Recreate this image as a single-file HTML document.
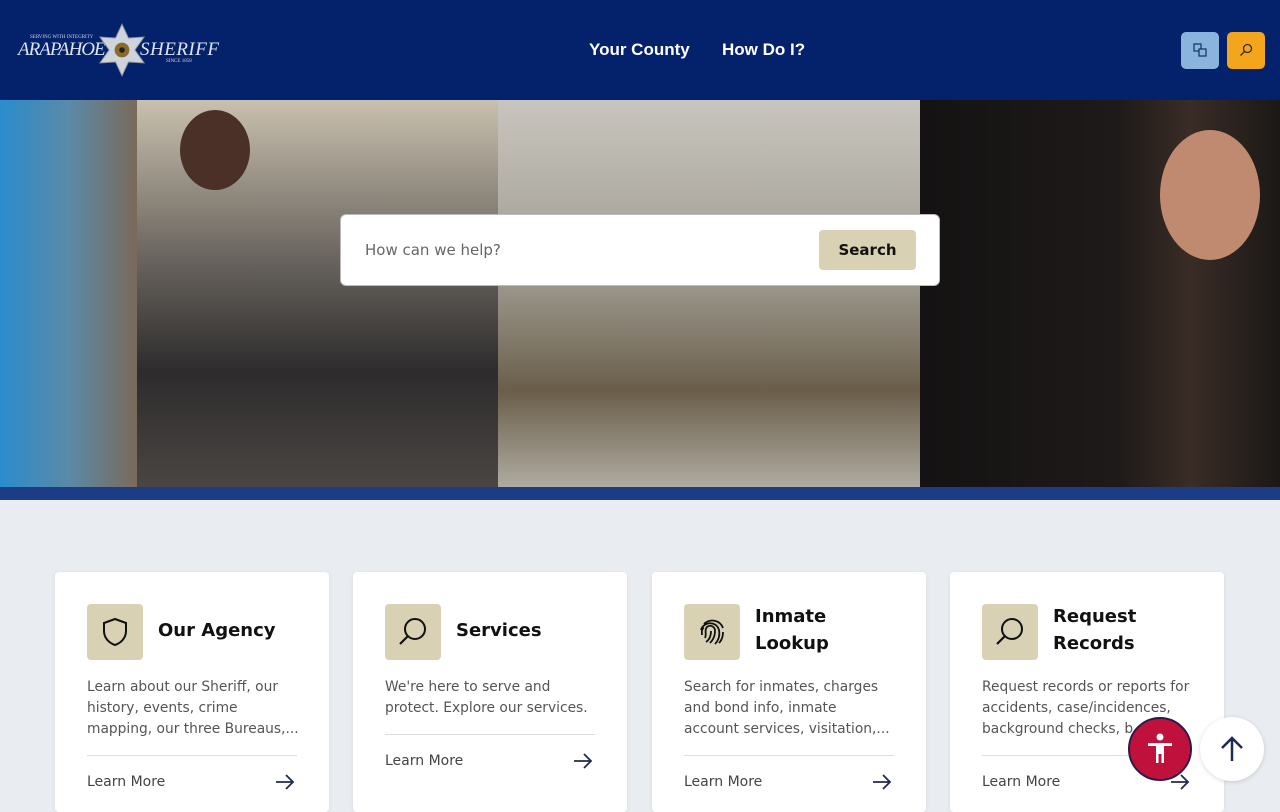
<!DOCTYPE html>
<html><head><meta charset="utf-8"><style>
*{box-sizing:border-box;margin:0;padding:0}
body{width:1280px;height:800px;overflow:hidden;font-family:"DejaVu Sans","Liberation Sans",sans-serif;background:#e9ecf0;position:relative}
header{position:absolute;top:0;left:0;width:1280px;height:100px;background:#04216b}
.nav{position:absolute;top:40px;color:#fff;font-weight:bold;font-size:17px;font-family:"Liberation Sans",sans-serif}
.btn{position:absolute;top:32px;width:38px;height:37px;border-radius:5px}
.hero{position:absolute;top:100px;left:0;width:1280px;height:388px;overflow:hidden}
.p{position:absolute;top:0;height:388px}
.strip{position:absolute;top:487px;left:0;width:1280px;height:13px;background:#1c3c86}
.search{position:absolute;left:340px;top:214px;width:600px;height:72px;background:#fff;border:1px solid #bbb;border-radius:6px}
.search span{position:absolute;left:24px;top:26px;color:#666;font-size:15px}
.search b{position:absolute;left:478px;top:15px;width:97px;height:40px;background:#d8d1b3;border-radius:4px;font-size:15px;text-align:center;line-height:40px;color:#111}
.card{position:absolute;top:572px;width:274px;height:240px;background:#fff;border-radius:4px;box-shadow:0 1px 4px rgba(0,0,0,.08)}
.ic{position:absolute;left:32px;top:32px;width:56px;height:56px;background:#d8d1b3;border-radius:4px}
.ic svg{position:absolute;left:12px;top:12px}
.t{position:absolute;left:103px;font-weight:bold;font-size:18px;line-height:27px;color:#111}
.d{position:absolute;left:32px;top:105px;white-space:nowrap;font-size:13.8px;line-height:21px;color:#555}
.hr{position:absolute;left:32px;width:210px;height:1px;background:#ddd}
.lm{position:absolute;left:32px;font-size:14px;color:#444}
.ar{position:absolute;left:220px}
</style></head><body>
<header>
<div style="position:absolute;left:18px;top:39px;color:#dfe4ee;font-family:'Liberation Serif',serif;font-size:19px;font-style:italic;letter-spacing:-1px">ARAPAHOE</div>
<svg style="position:absolute;left:98px;top:22px" width="48" height="56" viewBox="0 0 52 56"><polygon points="26,0 33,15 50,14 40,28 50,42 33,41 26,56 19,41 2,42 12,28 2,14 19,15" fill="#cfd3dc" stroke="#8a8f9a"/><circle cx="26" cy="28" r="8" fill="#8a6a2a"/><circle cx="26" cy="28" r="3" fill="#222"/></svg>
<div style="position:absolute;left:140px;top:39px;color:#dfe4ee;font-family:'Liberation Serif',serif;font-size:19px;font-style:italic;letter-spacing:0.5px">SHERIFF</div>
<div style="position:absolute;left:30px;top:35px;color:#cfd6e4;font-family:'Liberation Serif',serif;font-size:5px">SERVING WITH INTEGRITY</div>
<div style="position:absolute;left:166px;top:59px;color:#cfd6e4;font-family:'Liberation Serif',serif;font-size:5px">SINCE 1858</div>
<div class="nav" style="left:589px">Your County</div>
<div class="nav" style="left:722px">How Do I?</div>
<div class="btn" style="left:1181px;background:#8ab4de"><svg style="position:absolute;left:12px;top:11px" width="14" height="14" viewBox="0 0 14 14" fill="none" stroke="#14305f" stroke-width="1.2"><rect x="1" y="1" width="7" height="7"/><rect x="6" y="6" width="7" height="7" fill="#8ab4de"/></svg></div>
<div class="btn" style="left:1227px;background:#f3a61b"><svg style="position:absolute;left:12px;top:11px" width="14" height="14" viewBox="0 0 14 14"><circle cx="8.5" cy="5.5" r="4" fill="none" stroke="#3a2a10" stroke-width="1.3"/><line x1="5.5" y1="8.5" x2="1.5" y2="12.5" stroke="#3a2a10" stroke-width="1.3"/></svg></div>
</header>
<div class="hero">
<div class="p" style="left:0;width:137px;background:linear-gradient(90deg,#2a8ccc,#5a8aa8 50%,#7a6a5a)"></div>
<div class="p" style="left:137px;width:361px;background:linear-gradient(180deg,#c9c0ae 0%,#6b6660 40%,#2d2b2c 70%,#4a4643)"></div>
<div class="p" style="left:498px;width:422px;background:linear-gradient(180deg,#c8c5be 0%,#a09c92 45%,#6a5e4a 75%,#b0aca2)"></div>
<div class="p" style="left:920px;width:360px;background:linear-gradient(90deg,#141212,#1e1a19 55%,#3a2c26 75%,#1b1816)"></div>
<div style="position:absolute;left:1160px;top:30px;width:100px;height:130px;border-radius:50%;background:#c08a70"></div>
<div style="position:absolute;left:180px;top:10px;width:70px;height:80px;border-radius:50%;background:#4a3026"></div>
</div>
<div class="strip"></div>
<div class="search"><span>How can we help?</span><b>Search</b></div>

<div class="card" style="left:55px"><div class="ic"><svg width="32" height="32" viewBox="0 0 32 32"><path d="M16 3 L27 7 V15 C27 22 22 27 16 29 C10 27 5 22 5 15 V7 Z" fill="none" stroke="#111" stroke-width="2"/></svg></div>
<div class="t" style="top:45px">Our Agency</div>
<div class="d">Learn about our Sheriff, our<br>history, events, crime<br>mapping, our three Bureaus,...</div>
<div class="hr" style="top:183px"></div><div class="lm" style="top:202px">Learn More</div><svg class="ar" style="top:202px" width="20" height="16" viewBox="0 0 20 16" fill="none" stroke="#222a4a" stroke-width="1.8"><path d="M1 8 H18 M11 1 L18 8 L11 15"/></svg></div>

<div class="card" style="left:353px"><div class="ic"><svg width="32" height="32" viewBox="0 0 32 32"><circle cx="18" cy="13" r="10" fill="none" stroke="#111" stroke-width="2"/><line x1="11" y1="20" x2="3" y2="28" stroke="#111" stroke-width="2.2"/></svg></div>
<div class="t" style="top:45px">Services</div>
<div class="d">We're here to serve and<br>protect. Explore our services.</div>
<div class="hr" style="top:162px"></div><div class="lm" style="top:181px">Learn More</div><svg class="ar" style="top:181px" width="20" height="16" viewBox="0 0 20 16" fill="none" stroke="#222a4a" stroke-width="1.8"><path d="M1 8 H18 M11 1 L18 8 L11 15"/></svg></div>

<div class="card" style="left:652px"><div class="ic"><svg width="32" height="32" viewBox="0 0 32 32" fill="none" stroke="#111" stroke-width="1.8"><path d="M8 8 C14 2 24 4 27 12"/><path d="M5 14 C7 6 20 4 23 14 C24 20 22 25 19 28"/><path d="M9 22 C11 18 8 14 11 11 C15 8 19 11 19 15 C19 20 17 24 14 27"/><path d="M6 19 C6 16 5 13 8 12"/><path d="M15 15 C15 20 13 24 10 26"/><path d="M27 16 C27 21 25 25 23 27"/></svg></div>
<div class="t" style="top:31px">Inmate<br>Lookup</div>
<div class="d">Search for inmates, charges<br>and bond info, inmate<br>account services, visitation,...</div>
<div class="hr" style="top:183px"></div><div class="lm" style="top:202px">Learn More</div><svg class="ar" style="top:202px" width="20" height="16" viewBox="0 0 20 16" fill="none" stroke="#222a4a" stroke-width="1.8"><path d="M1 8 H18 M11 1 L18 8 L11 15"/></svg></div>

<div class="card" style="left:950px"><div class="ic"><svg width="32" height="32" viewBox="0 0 32 32"><circle cx="18" cy="13" r="10" fill="none" stroke="#111" stroke-width="2"/><line x1="11" y1="20" x2="3" y2="28" stroke="#111" stroke-width="2.2"/></svg></div>
<div class="t" style="top:31px">Request<br>Records</div>
<div class="d">Request records or reports for<br>accidents, case/incidences,<br>background checks, b...</div>
<div class="hr" style="top:183px"></div><div class="lm" style="top:202px">Learn More</div><svg class="ar" style="top:202px" width="20" height="16" viewBox="0 0 20 16" fill="none" stroke="#222a4a" stroke-width="1.8"><path d="M1 8 H18 M11 1 L18 8 L11 15"/></svg></div>

<div style="position:absolute;left:1128px;top:717px;width:64px;height:64px;border-radius:50%;background:#c0103c;border:2px solid #2a1a4a"><svg style="position:absolute;left:16px;top:14px" width="28" height="32" viewBox="0 0 28 32"><circle cx="14" cy="4" r="3.5" fill="#fff"/><path d="M2 10 H26 V13 H18 V30 H15.5 V21 H12.5 V30 H10 V13 H2 Z" fill="#fff"/></svg></div>
<div style="position:absolute;left:1200px;top:717px;width:64px;height:64px;border-radius:50%;background:#fff;box-shadow:0 1px 5px rgba(0,0,0,.15)"><svg style="position:absolute;left:18px;top:18px" width="28" height="28" viewBox="0 0 28 28" fill="none" stroke="#1a2a5a" stroke-width="2.5"><path d="M14 26 V3 M4 13 L14 3 L24 13"/></svg></div>
</body></html>
